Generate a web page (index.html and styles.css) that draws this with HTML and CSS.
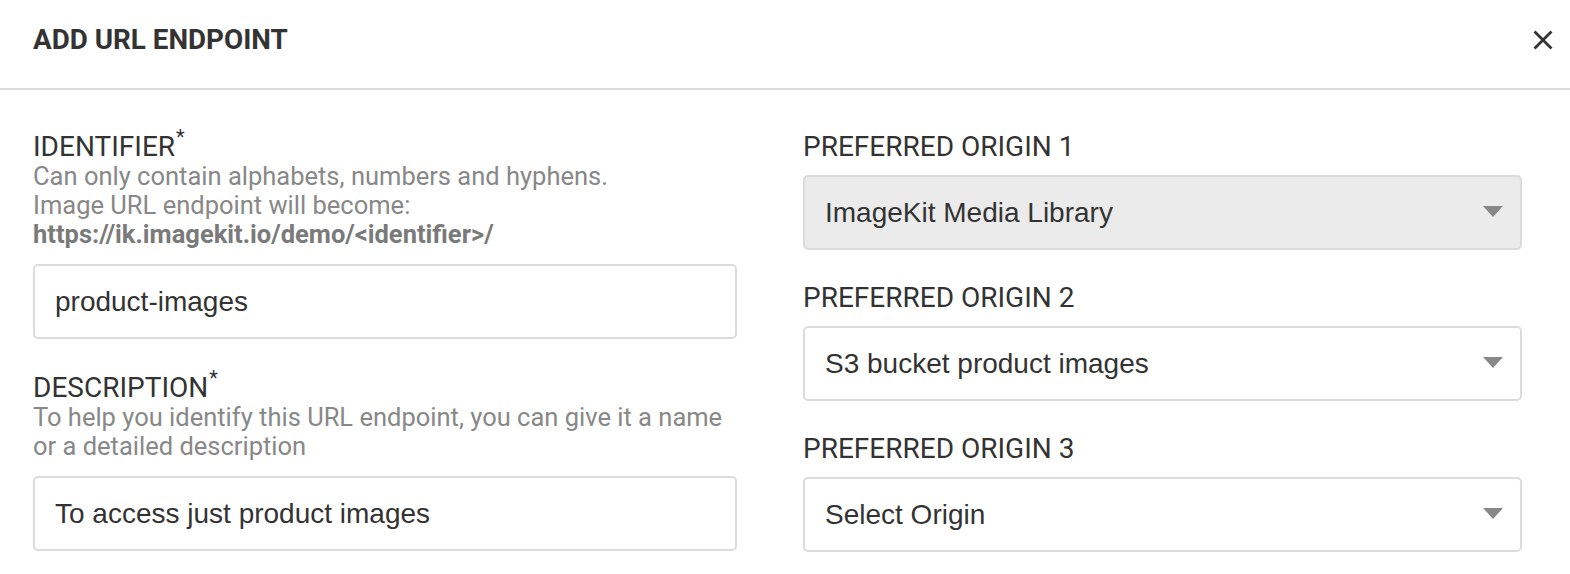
FILE: index.html
```html
<!DOCTYPE html>
<html lang="en">
<head>
<meta charset="utf-8">
<title>Add URL Endpoint</title>
<link rel="stylesheet" href="styles.css">
</head>
<body>
<div class="modal">
  <div class="modal-header">
    <h2 class="modal-title">ADD URL ENDPOINT</h2>
    <button class="close-btn" aria-label="Close">
      <svg width="20" height="20" viewBox="0 0 20 20"><path d="M1.5 1.5 L18.5 18.5 M18.5 1.5 L1.5 18.5" stroke="#333" stroke-width="2.8" fill="none"/></svg>
    </button>
  </div>
  <div class="modal-body">
    <div class="column">
      <div class="field">
        <label class="label">IDENTIFIER<sup>*</sup></label>
        <div class="help">Can only contain alphabets, numbers and hyphens.<br>Image URL endpoint will become:<br><strong>https://ik.imagekit.io/demo/&lt;identifier&gt;/</strong></div>
        <input class="control" type="text" value="product-images">
      </div>
      <div class="field">
        <label class="label">DESCRIPTION<sup>*</sup></label>
        <div class="help">To help you identify this URL endpoint, you can give it a name<br>or a detailed description</div>
        <input class="control" type="text" value="To access just product images">
      </div>
    </div>
    <div class="column right">
      <div class="field">
        <label class="label">PREFERRED ORIGIN 1</label>
        <div class="control select disabled"><span>ImageKit Media Library</span><span class="caret"></span></div>
      </div>
      <div class="field">
        <label class="label">PREFERRED ORIGIN 2</label>
        <div class="control select"><span>S3 bucket product images</span><span class="caret"></span></div>
      </div>
      <div class="field">
        <label class="label">PREFERRED ORIGIN 3</label>
        <div class="control select"><span>Select Origin</span><span class="caret"></span></div>
      </div>
    </div>
  </div>
</div>
</body>
</html>
```

FILE: styles.css
```css
* { box-sizing: border-box; }
html, body { margin: 0; padding: 0; background: #fff; }
body {
  font-family: Roboto, "Liberation Sans", Arial, sans-serif;
  color: #333;
  width: 1570px;
  height: 574px;
  overflow: hidden;
}
.modal-header {
  height: 90px;
  border-bottom: 2px solid #dcdcdc;
  display: flex;
  justify-content: space-between;
  align-items: flex-start;
  padding: 22px 17px 0 33px;
}
.modal-title {
  margin: 0;
  font-size: 27.8px;
  line-height: 36px;
  font-weight: 700;
  color: #333;
}
.close-btn {
  margin-top: 8px;
  padding: 0;
  border: 0;
  background: none;
  width: 20px;
  height: 20px;
  display: block;
}
.close-btn svg { display: block; }
.modal-body {
  display: grid;
  grid-template-columns: 704px 719px;
  column-gap: 66px;
  padding: 41px 0 0 33px;
}
.column { display: flex; flex-direction: column; gap: 33px; }
.column.right { gap: 32px; }
.field { display: flex; flex-direction: column; }
.label {
  font-size: 28px;
  line-height: 31px;
  color: #333;
}
.label sup {
  font-size: 20px;
  line-height: 0;
  vertical-align: 12px;
  margin-left: 1px;
}
.help {
  font-size: 25.5px;
  line-height: 29px;
  color: #888;
  margin-bottom: 15px;
}
.help strong { color: #7a7a7a; font-weight: 700; }
.label + .control { margin-top: 13px; }
.control {
  width: 100%;
  height: 75px;
  border: 2px solid #dcdcdc;
  border-radius: 5px;
  background: #fff;
  font-family: "Liberation Sans", Arial, sans-serif;
  font-size: 28px;
  color: #333;
  padding: 0 20px;
  outline: none;
  margin: 0;
}
.select {
  display: flex;
  align-items: center;
  justify-content: space-between;
  padding-right: 17px;
}
.select.disabled { background: #ebebeb; }
.caret {
  width: 0;
  height: 0;
  border-left: 10.5px solid transparent;
  border-right: 10.5px solid transparent;
  border-top: 11px solid #888;
  margin-top: -3px;
}
```
